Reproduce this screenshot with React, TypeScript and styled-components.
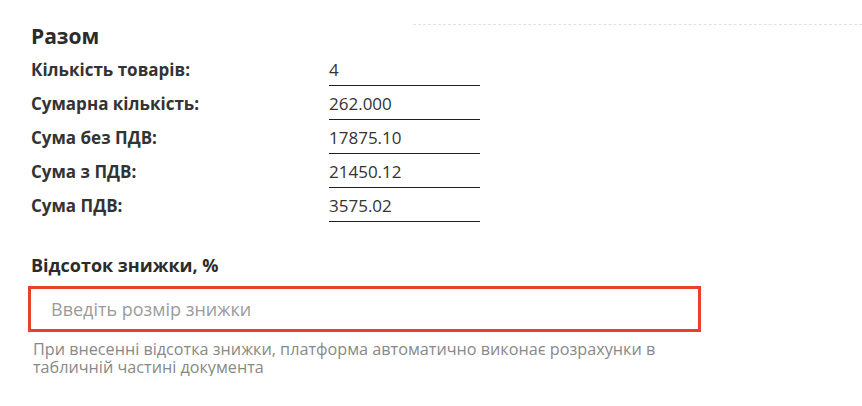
import styled, { createGlobalStyle } from "styled-components";

const GlobalStyle = createGlobalStyle`
  html, body {
    margin: 0;
    padding: 0;
    background: #ffffff;
  }
  body {
    font-family: "Open Sans", "Liberation Sans", sans-serif;
    color: #333333;
  }
`;

const Page = styled.div`
  display: flex;
  flex-direction: column;
  padding: 22px 0 0 31px;
`;

const Header = styled.div`
  display: flex;
  align-items: flex-start;
`;

const Title = styled.h2`
  margin: 0;
  font-size: 21px;
  line-height: 28px;
  font-weight: 700;
  color: #2b2b2b;
`;

const Rule = styled.div`
  margin: 2px 0 0 auto;
  width: 449px;
  border-top: 1px dashed #e2e2e2;
`;

const Summary = styled.div`
  display: grid;
  grid-template-columns: 298px 151px;
  row-gap: 6px;
  margin-top: 8px;
`;

const Label = styled.div`
  font-size: 17px;
  line-height: 24px;
  font-weight: 700;
  color: #333333;
`;

const Value = styled.div`
  font-size: 17px;
  line-height: 24px;
  color: #333333;
  padding-bottom: 3px;
  border-bottom: 1px solid #1f1f1f;
`;

const Field = styled.div`
  display: flex;
  flex-direction: column;
  margin-top: 31px;
`;

const FieldLabel = styled.label`
  font-size: 18px;
  line-height: 24px;
  font-weight: 700;
  color: #2b2b2b;
`;

const Input = styled.input`
  box-sizing: border-box;
  width: 673px;
  height: 46px;
  margin: 9px 0 0 -3px;
  padding: 0 20px;
  border: 3px solid #e8412c;
  outline: none;
  font-family: inherit;
  font-size: 18px;
  color: #333333;

  &::placeholder {
    color: #9b9b9b;
  }
`;

const Help = styled.p`
  width: 668px;
  margin: 8px 0 0 2px;
  font-size: 16.2px;
  line-height: 18px;
  color: #888888;
`;

const rows: [string, string][] = [
  ["Кількість товарів:", "4"],
  ["Сумарна кількість:", "262.000"],
  ["Сума без ПДВ:", "17875.10"],
  ["Сума з ПДВ:", "21450.12"],
  ["Сума ПДВ:", "3575.02"],
];

const App = () => {
  return (
    <>
      <GlobalStyle />
      <Page>
        <Header>
          <Title>Разом</Title>
          <Rule />
        </Header>
        <Summary>
          {rows.map(([label, value]) => [
            <Label key={label}>{label}</Label>,
            <Value key={label + "-value"}>{value}</Value>,
          ])}
        </Summary>
        <Field>
          <FieldLabel htmlFor="discount">Відсоток знижки, %</FieldLabel>
          <Input id="discount" placeholder="Введіть розмір знижки" />
          <Help>
            При внесенні відсотка знижки, платформа автоматично виконає розрахунки в
            табличній частині документа
          </Help>
        </Field>
      </Page>
    </>
  );
};

export default App;
